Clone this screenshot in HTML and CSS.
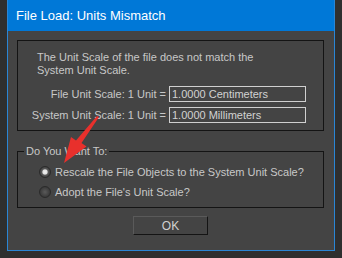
FILE: index.html
```html
<!DOCTYPE html>
<html>
<head>
<meta charset="utf-8">
<link rel="stylesheet" href="styles.css">
</head>
<body>
<div class="desk">
  <div class="win">
    <div class="title">File Load: Units Mismatch</div>
    <div class="group1">
      <p class="msg">The Unit Scale of the file does not match the<br>System Unit Scale.</p>
      <div class="rows">
        <span class="lbl">File Unit Scale: 1 Unit =</span>
        <span class="field">1.0000 Centimeters</span>
        <span class="lbl">System Unit Scale: 1 Unit =</span>
        <span class="field">1.0000 Millimeters</span>
      </div>
    </div>
    <fieldset class="group2">
      <legend>Do You Want To:</legend>
      <div class="opt"><span class="radio on"></span>Rescale the File Objects to the System Unit Scale?</div>
      <div class="opt"><span class="radio"></span>Adopt the File's Unit Scale?</div>
    </fieldset>
    <div class="btnrow"><button class="ok">OK</button></div>
  </div>
  <svg class="arrow" width="342" height="258" viewBox="0 0 342 258">
    <path d="M99 117 L81.5 143 L86.5 146.5 L64 163 L71 137 L76 140.5 L97 116 Z" fill="#e8302c"/>
  </svg>
</div>
</body>
</html>
```
FILE: styles.css
```css
html, body {
  margin: 0;
  padding: 0;
  background: #2f2f2f;
}
.desk {
  position: relative;
  width: 342px;
  height: 258px;
  overflow: hidden;
  font-family: "Liberation Sans", Arial, sans-serif;
  font-size: 11px;
  color: #c8c8c8;
}
.win {
  margin-left: 7px;
  width: 326px;
  height: 250px;
  border: 1px solid #2a86d6;
  border-top: none;
  background: #444444;
}
.title {
  height: 31px;
  line-height: 31px;
  background: #0078d7;
  color: #ffffff;
  font-size: 13px;
  padding-left: 8px;
}
.group1 {
  margin: 9px 10px 0 9px;
  height: 89px;
  border: 1px solid #141414;
}
.msg {
  margin: 10px 0 0 19px;
  line-height: 13px;
}
.rows {
  display: grid;
  grid-template-columns: 148px 137px;
  column-gap: 3px;
  row-gap: 5px;
  margin-top: 9px;
}
.lbl {
  text-align: right;
  line-height: 16px;
}
.field {
  height: 14px;
  line-height: 14px;
  border: 1px solid #d0d0d0;
  padding-left: 2px;
  color: #d2d2d2;
}
.group2 {
  margin: 13px 10px 0 9px;
  padding: 4px 0 0 21px;
  height: 64px;
  box-sizing: border-box;
  border: 1px solid #141414;
}
.group2 legend {
  padding: 0 2px;
  margin-left: -15px;
  line-height: 14px;
}
.opt {
  display: flex;
  align-items: center;
  height: 20px;
  gap: 4px;
}
.radio {
  width: 10px;
  height: 10px;
  border-radius: 50%;
  background: radial-gradient(circle at 50% 50%, #5a5a5a 0, #3a3a3a 70%);
  border: 1px solid #2a2a2a;
}
.radio.on {
  background: radial-gradient(circle at 50% 50%, #f2f2f2 0, #e0e0e0 30%, #5a5a5a 45%, #3a3a3a 80%);
}
.btnrow {
  display: flex;
  padding-left: 125px;
  margin-top: 8px;
}
.ok {
  width: 75px;
  height: 19px;
  background: #444444;
  border: 1px solid #141414;
  border-top-color: #5a5a5a;
  border-left-color: #5a5a5a;
  color: #d0d0d0;
  font-family: "Liberation Sans", Arial, sans-serif;
  font-size: 12px;
  padding: 0;
}
.arrow {
  position: absolute;
  left: 0;
  top: 0;
  pointer-events: none;
}
```
